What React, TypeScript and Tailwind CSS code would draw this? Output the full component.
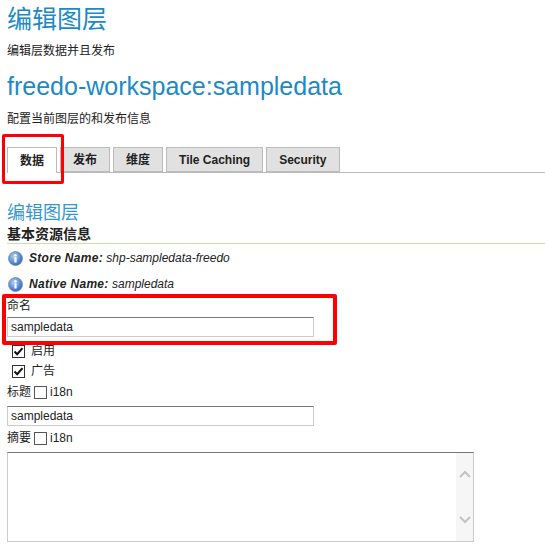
import React from "react";

function InfoIcon() {
  return (
    <svg width="15" height="15" viewBox="0 0 15 15" className="shrink-0">
      <defs>
        <radialGradient id="ig" cx="40%" cy="35%" r="70%">
          <stop offset="0%" stopColor="#b9d3f0" />
          <stop offset="60%" stopColor="#5b8fcf" />
          <stop offset="100%" stopColor="#2f62a8" />
        </radialGradient>
      </defs>
      <circle cx="7.5" cy="7.5" r="7" fill="url(#ig)" stroke="#6d8fbf" strokeWidth="0.8" />
      <circle cx="7.5" cy="4.2" r="1.2" fill="#fff" />
      <rect x="6.4" y="6.2" width="2.2" height="5.4" rx="0.4" fill="#fff" />
    </svg>
  );
}

function Check({ checked }: { checked: boolean }) {
  return (
    <span className="inline-flex h-[13px] w-[13px] shrink-0 items-center justify-center border border-[#333] bg-white">
      {checked && (
        <svg width="11" height="11" viewBox="0 0 11 11">
          <path d="M1.5 5.5 L4.2 8.2 L9.5 2.2" fill="none" stroke="#111" strokeWidth="2" />
        </svg>
      )}
    </span>
  );
}

function Tab({ label, active }: { label: string; active?: boolean }) {
  return (
    <div
      className={
        active
          ? "flex h-[26px] items-center border border-b-0 border-[#bbb] bg-white px-[12px] text-[12px] font-bold text-[#222] -mb-px"
          : "flex h-[25px] items-center border border-[#bbb] bg-[#e1e1e1] px-[12px] text-[12px] font-bold text-[#222]"
      }
    >
      {label}
    </div>
  );
}

export default function App() {
  return (
    <div className="relative h-[551px] w-[545px] overflow-hidden bg-white font-['Liberation_Sans','Noto_Sans_CJK_SC',sans-serif] text-[#222]">
      <div className="pl-[7px]">
        <h1 className="mt-[4px] text-[25px] leading-[30px] text-[#1c8ac6]">编辑图层</h1>
        <p className="mt-[9px] text-[12px] leading-[16px]">编辑层数据并且发布</p>
        <h2 className="mt-[12px] text-[25px] leading-[30px] text-[#1c8ac6]">freedo-workspace:sampledata</h2>
        <p className="mt-[10px] text-[12px] leading-[16px]">配置当前图层的和发布信息</p>

        <div className="mt-[20px] flex h-[26px] items-end gap-[3px] border-b border-[#bbb]">
          <Tab label="数据" active />
          <Tab label="发布" />
          <Tab label="维度" />
          <Tab label="Tile Caching" />
          <Tab label="Security" />
        </div>

        <h3 className="mt-[29px] text-[18px] leading-[22px] text-[#3597cf]">编辑图层</h3>
        <div className="mt-[1px] h-[19px] border-b border-[#cbdfa6] text-[14px] font-bold leading-[18px] text-[#222]">
          基本资源信息
        </div>

        <div className="mt-[6px] flex h-[16px] items-center gap-[6px] pl-[1px] text-[12px] italic">
          <InfoIcon />
          <span>
            <b className="tracking-[0.3px]">Store Name:</b> shp-sampledata-freedo
          </span>
        </div>
        <div className="mt-[10px] flex h-[16px] items-center gap-[6px] pl-[1px] text-[12px] italic">
          <InfoIcon />
          <span>
            <b className="tracking-[0.3px]">Native Name:</b> sampledata
          </span>
        </div>

        <div className="mt-[6px] h-[16px] text-[12px] leading-[16px]">命名</div>
        <div className="mt-[3px] flex h-[20px] w-[307px] items-center border border-[#ccc] border-t-[#777] px-[3px] text-[12px]">
          sampledata
        </div>

        <div className="mt-[6px] flex h-[16px] items-center gap-[6px] pl-[5px] text-[12px]">
          <Check checked />
          <span>启用</span>
        </div>
        <div className="mt-[4px] flex h-[16px] items-center gap-[6px] pl-[5px] text-[12px]">
          <Check checked />
          <span>广告</span>
        </div>

        <div className="mt-[5px] flex h-[16px] items-center gap-[3px] text-[12px]">
          <span>标题</span>
          <span className="inline-block h-[13px] w-[13px] border border-[#555] bg-white" />
          <span>i18n</span>
        </div>
        <div className="mt-[6px] flex h-[20px] w-[307px] items-center border border-[#ccc] border-t-[#777] px-[3px] text-[12px]">
          sampledata
        </div>

        <div className="mt-[4px] flex h-[16px] items-center gap-[3px] text-[12px]">
          <span>摘要</span>
          <span className="inline-block h-[13px] w-[13px] border border-[#555] bg-white" />
          <span>i18n</span>
        </div>
        <div className="mt-[6px] flex h-[90px] w-[467px] justify-end border border-[#ccc] border-t-[#777] bg-white">
          <div className="flex w-[17px] flex-col items-center justify-between bg-[#f6f6f6] py-[17px]">
            <svg width="12" height="8" viewBox="0 0 12 8">
              <path d="M1 7 L6 2 L11 7" fill="none" stroke="#c3c3c3" strokeWidth="2" />
            </svg>
            <svg width="12" height="8" viewBox="0 0 12 8">
              <path d="M1 1 L6 6 L11 1" fill="none" stroke="#c3c3c3" strokeWidth="2" />
            </svg>
          </div>
        </div>
      </div>

      <div className="pointer-events-none absolute left-[2px] top-[134px] h-[50px] w-[62px] rounded-[2px] border-[3px] border-[#ff0000]" />
      <div className="pointer-events-none absolute left-[2px] top-[294px] h-[51px] w-[335px] rounded-[2px] border-[4px] border-[#ff0000]" />
    </div>
  );
}
